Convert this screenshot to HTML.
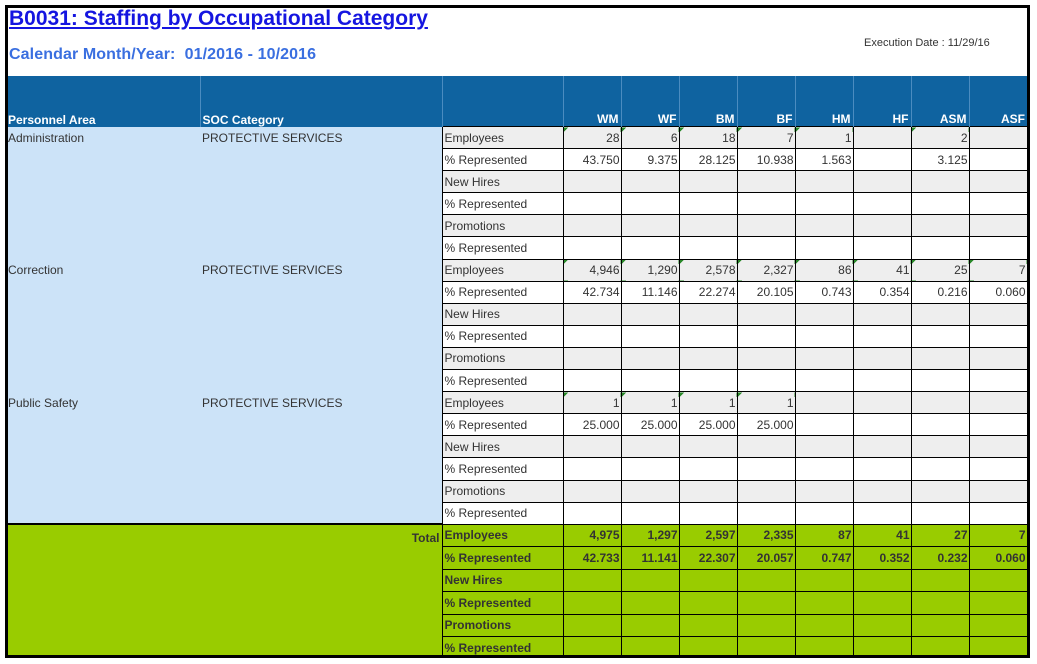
<!DOCTYPE html>
<html><head><meta charset="utf-8">
<style>
body{margin:0;background:#fff;width:1037px;height:664px;overflow:hidden;font-family:"Liberation Sans",Arial,sans-serif}
#box{position:absolute;left:5px;top:5px;width:1019px;height:647px;border:3px solid #000;overflow:hidden;background:#fff}
h1{position:absolute;left:1px;top:-1px;margin:0;font-size:21px;font-weight:bold;color:#1515e0;text-decoration:underline}
.sub{position:absolute;left:1px;top:38px;font-size:16px;font-weight:bold;color:#3a6fe0;letter-spacing:0.1px}
.exe{position:absolute;left:856px;top:29px;font-size:11px;color:#333}
table{position:absolute;left:0;top:68px;border-collapse:collapse;table-layout:fixed;width:1019px;font-size:12px;color:#333}
td{padding:0 2px;white-space:nowrap;overflow:hidden;line-height:14px}
tr.h td{height:50px;background:#0f63a0;color:#fff;font-weight:bold;vertical-align:bottom;text-align:right;border-left:1px solid #4b8cc0;padding-bottom:0;line-height:14px}
tr.h td.l{text-align:left}
tr.h td.f{padding-left:0}
tr.r td{height:21.1px}
td.pa{background:#cce3f8;vertical-align:top;padding-top:4px}
td.p0{padding-left:0}
td.lb,td.v{border:1px solid #000}
td.v{text-align:right;padding-right:1px}
tr.gy td.lb,tr.gy td.v{background:#eeeeee}
tr.wh td.lb,tr.wh td.v{background:#fff}
td.m{background-image:linear-gradient(135deg,#2a8a2a 3.5px,transparent 3.5px)!important}
tr.t td{height:21.5px;background:#99cc00;font-weight:bold;border:1px solid #000}
tr.t td.tt{text-align:right;vertical-align:top;padding-top:6px;border:none;border-top:2px solid #000}
tr.t td.v{text-align:right}
</style></head><body>
<div id="box">
<h1>B0031: Staffing by Occupational Category</h1>
<div class="sub">Calendar Month/Year:&nbsp; 01/2016 - 10/2016</div>
<div class="exe">Execution Date : 11/29/16</div>
<table>
<colgroup><col style="width:192px"><col style="width:242px"><col style="width:121px"><col style="width:58px"><col style="width:58px"><col style="width:58px"><col style="width:58px"><col style="width:58px"><col style="width:58px"><col style="width:58px"><col style="width:58px"></colgroup>
<tr class="h"><td class="l f" style="border-left:none">Personnel Area</td><td class="l">SOC Category</td><td></td><td>WM</td><td>WF</td><td>BM</td><td>BF</td><td>HM</td><td>HF</td><td>ASM</td><td>ASF</td></tr>

<tr class="r gy"><td class="pa p0" rowspan="6">Administration</td><td class="pa" rowspan="6">PROTECTIVE SERVICES</td><td class="lb">Employees</td><td class="v m">28</td><td class="v m">6</td><td class="v m">18</td><td class="v m">7</td><td class="v m">1</td><td class="v"></td><td class="v m">2</td><td class="v"></td></tr>
<tr class="r wh"><td class="lb">% Represented</td><td class="v">43.750</td><td class="v">9.375</td><td class="v">28.125</td><td class="v">10.938</td><td class="v">1.563</td><td class="v"></td><td class="v">3.125</td><td class="v"></td></tr>
<tr class="r gy"><td class="lb">New Hires</td><td class="v"></td><td class="v"></td><td class="v"></td><td class="v"></td><td class="v"></td><td class="v"></td><td class="v"></td><td class="v"></td></tr>
<tr class="r wh"><td class="lb">% Represented</td><td class="v"></td><td class="v"></td><td class="v"></td><td class="v"></td><td class="v"></td><td class="v"></td><td class="v"></td><td class="v"></td></tr>
<tr class="r gy"><td class="lb">Promotions</td><td class="v"></td><td class="v"></td><td class="v"></td><td class="v"></td><td class="v"></td><td class="v"></td><td class="v"></td><td class="v"></td></tr>
<tr class="r wh"><td class="lb">% Represented</td><td class="v"></td><td class="v"></td><td class="v"></td><td class="v"></td><td class="v"></td><td class="v"></td><td class="v"></td><td class="v"></td></tr>

<tr class="r gy"><td class="pa p0" rowspan="6">Correction</td><td class="pa" rowspan="6">PROTECTIVE SERVICES</td><td class="lb">Employees</td><td class="v m">4,946</td><td class="v m">1,290</td><td class="v m">2,578</td><td class="v m">2,327</td><td class="v m">86</td><td class="v m">41</td><td class="v m">25</td><td class="v m">7</td></tr>
<tr class="r wh"><td class="lb">% Represented</td><td class="v">42.734</td><td class="v">11.146</td><td class="v">22.274</td><td class="v">20.105</td><td class="v">0.743</td><td class="v">0.354</td><td class="v">0.216</td><td class="v">0.060</td></tr>
<tr class="r gy"><td class="lb">New Hires</td><td class="v"></td><td class="v"></td><td class="v"></td><td class="v"></td><td class="v"></td><td class="v"></td><td class="v"></td><td class="v"></td></tr>
<tr class="r wh"><td class="lb">% Represented</td><td class="v"></td><td class="v"></td><td class="v"></td><td class="v"></td><td class="v"></td><td class="v"></td><td class="v"></td><td class="v"></td></tr>
<tr class="r gy"><td class="lb">Promotions</td><td class="v"></td><td class="v"></td><td class="v"></td><td class="v"></td><td class="v"></td><td class="v"></td><td class="v"></td><td class="v"></td></tr>
<tr class="r wh"><td class="lb">% Represented</td><td class="v"></td><td class="v"></td><td class="v"></td><td class="v"></td><td class="v"></td><td class="v"></td><td class="v"></td><td class="v"></td></tr>

<tr class="r gy"><td class="pa p0" rowspan="6">Public Safety</td><td class="pa" rowspan="6">PROTECTIVE SERVICES</td><td class="lb">Employees</td><td class="v m">1</td><td class="v m">1</td><td class="v m">1</td><td class="v m">1</td><td class="v"></td><td class="v"></td><td class="v"></td><td class="v"></td></tr>
<tr class="r wh"><td class="lb">% Represented</td><td class="v">25.000</td><td class="v">25.000</td><td class="v">25.000</td><td class="v">25.000</td><td class="v"></td><td class="v"></td><td class="v"></td><td class="v"></td></tr>
<tr class="r gy"><td class="lb">New Hires</td><td class="v"></td><td class="v"></td><td class="v"></td><td class="v"></td><td class="v"></td><td class="v"></td><td class="v"></td><td class="v"></td></tr>
<tr class="r wh"><td class="lb">% Represented</td><td class="v"></td><td class="v"></td><td class="v"></td><td class="v"></td><td class="v"></td><td class="v"></td><td class="v"></td><td class="v"></td></tr>
<tr class="r gy"><td class="lb">Promotions</td><td class="v"></td><td class="v"></td><td class="v"></td><td class="v"></td><td class="v"></td><td class="v"></td><td class="v"></td><td class="v"></td></tr>
<tr class="r wh"><td class="lb">% Represented</td><td class="v"></td><td class="v"></td><td class="v"></td><td class="v"></td><td class="v"></td><td class="v"></td><td class="v"></td><td class="v"></td></tr>

<tr class="t"><td class="tt" colspan="2" rowspan="6">Total</td><td>Employees</td><td class="v">4,975</td><td class="v">1,297</td><td class="v">2,597</td><td class="v">2,335</td><td class="v">87</td><td class="v">41</td><td class="v">27</td><td class="v">7</td></tr>
<tr class="t"><td>% Represented</td><td class="v">42.733</td><td class="v">11.141</td><td class="v">22.307</td><td class="v">20.057</td><td class="v">0.747</td><td class="v">0.352</td><td class="v">0.232</td><td class="v">0.060</td></tr>
<tr class="t"><td>New Hires</td><td></td><td></td><td></td><td></td><td></td><td></td><td></td><td></td></tr>
<tr class="t"><td>% Represented</td><td></td><td></td><td></td><td></td><td></td><td></td><td></td><td></td></tr>
<tr class="t"><td>Promotions</td><td></td><td></td><td></td><td></td><td></td><td></td><td></td><td></td></tr>
<tr class="t"><td>% Represented</td><td></td><td></td><td></td><td></td><td></td><td></td><td></td><td></td></tr>
</table>
</div>
</body></html>
